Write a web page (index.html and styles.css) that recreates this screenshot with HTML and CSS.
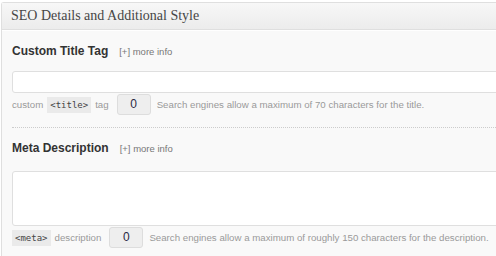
FILE: index.html
```html
<!DOCTYPE html>
<html lang="en">
<head>
  <meta charset="UTF-8">
  <title>SEO Details and Additional Style</title>
  <link rel="stylesheet" href="styles.css">
</head>
<body>

<div class="postbox">
  <h3 class="hndle">SEO Details and Additional Style</h3>

  <div class="inside">
    <!-- Title tag -->
    <div class="field">
      <div class="field-head">
        <span class="field-label">Custom Title Tag</span>
        <a class="more-info">[+] more info</a>
      </div>
      <input type="text" class="seo-input">
      <div class="field-meta">
        <span>custom</span>
        <code>&lt;title&gt;</code>
        <span>tag</span>
        <span class="counter">0</span>
        <span>Search engines allow a maximum of 70 characters for the title.</span>
      </div>
    </div>

    <!-- Meta description -->
    <div class="field field-last">
      <div class="field-head">
        <span class="field-label">Meta Description</span>
        <a class="more-info">[+] more info</a>
      </div>
      <textarea class="seo-textarea"></textarea>
      <div class="field-meta">
        <code>&lt;meta&gt;</code>
        <span>description</span>
        <span class="counter">0</span>
        <span>Search engines allow a maximum of roughly 150 characters for the description.</span>
      </div>
    </div>
  </div>
</div>

</body>
</html>
```

FILE: styles.css
```css
body {
  margin: 0;
  background: #fff;
  font-family: 'Liberation Sans', Arial, sans-serif;
  color: #333;
  overflow: hidden;
}

.postbox {
  margin: 2px 0 0 1px;
  width: 560px;
  border: 1px solid #dfdfdf;
  border-right: none;
  border-radius: 3px 0 0 0;
  background: #f9f9f9;
}

.hndle {
  margin: 0;
  height: 26px;
  padding: 0 9px;
  line-height: 26px;
  font-family: 'Liberation Serif', Georgia, serif;
  font-size: 14px;
  font-weight: normal;
  color: #464646;
  background: linear-gradient(to bottom, #f7f7f7, #ececec);
  border-bottom: 1px solid #dfdfdf;
  box-shadow: 0 1px 0 #fff;
}

.inside {
  padding: 0 0 0 10px;
}

.field {
  padding: 14px 0 12px;
  border-bottom: 1px dotted #ccc;
}

.field-last {
  padding-top: 13px;
  border-bottom: none;
}

.field-head {
  display: flex;
  align-items: baseline;
  gap: 11px;
  height: 20px;
}

.field-label {
  font-size: 12px;
  font-weight: bold;
  color: #333;
}

.more-info {
  font-size: 9.5px;
  color: #777;
}

.seo-input,
.seo-textarea {
  display: block;
  box-sizing: border-box;
  width: 100%;
  margin: 7px 0 0;
  background: #fff;
  border: 1px solid #dfdfdf;
  border-radius: 3px;
  font: inherit;
}

.seo-input {
  height: 22px;
}

.seo-textarea {
  height: 55px;
  margin-top: 10px;
  resize: none;
}

.field-meta {
  display: flex;
  align-items: center;
  gap: 4px;
  margin-top: 1px;
  font-size: 9.7px;
  color: #999;
  white-space: nowrap;
}

.field-meta code {
  padding: 3px 3px;
  font-family: 'DejaVu Sans Mono', monospace;
  font-size: 9px;
  color: #444;
  background: #eaeaea;
}

.counter {
  box-sizing: border-box;
  width: 34px;
  height: 21px;
  margin: 0 2px 0 4px;
  line-height: 19px;
  text-align: center;
  font-size: 12px;
  color: #2a2a44;
  background: #eee;
  border: 1px solid #ddd;
  border-radius: 3px;
}
```
